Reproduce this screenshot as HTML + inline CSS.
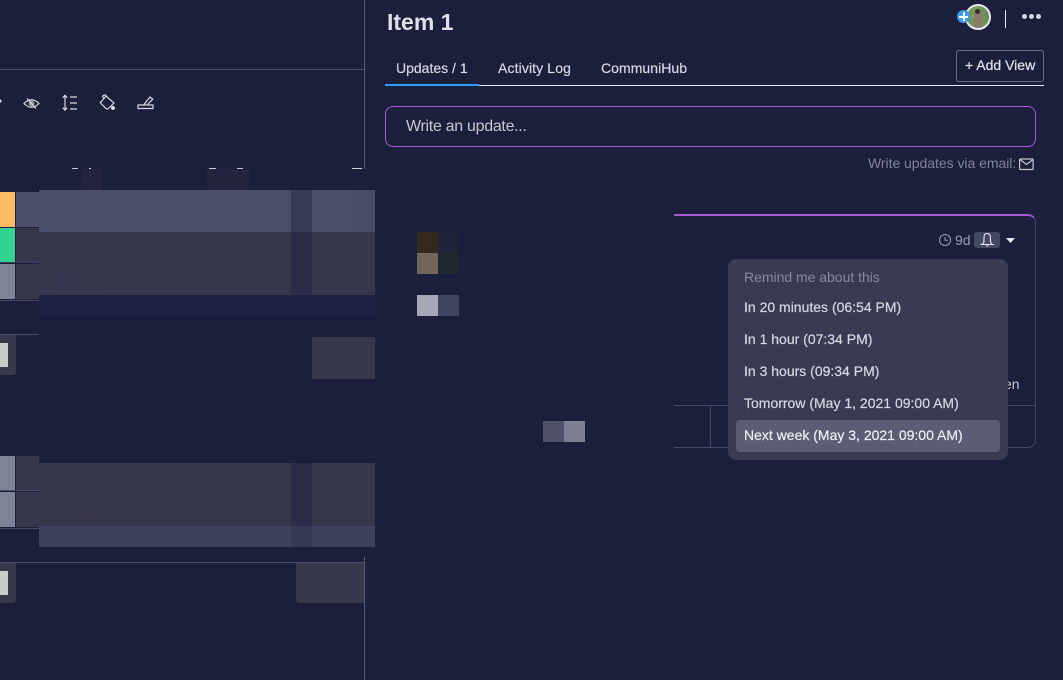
<!DOCTYPE html>
<html><head><meta charset="utf-8"><style>
html,body{margin:0;padding:0;background:#1c1f3b}
body{width:1063px;height:680px;position:relative;overflow:hidden;font-family:"Liberation Sans",sans-serif;color:#d5d8df}
.b{position:absolute}
.t{position:absolute;white-space:nowrap;line-height:20px;font-size:14px}
.m{-webkit-text-stroke:.2px currentColor}
svg{position:absolute;overflow:visible}
</style></head><body>
<!-- left panel -->
<div class="b" style="left:0;top:69px;width:364px;height:1px;background:#4b4e69"></div>
<div class="b" style="left:364px;top:0;width:1px;height:169px;background:#5b5e78"></div>
<div class="b" style="left:364px;top:557px;width:1px;height:123px;background:#5b5e78"></div>
<svg style="left:0;top:0" width="170" height="120" fill="none" stroke="#d5d8df" stroke-width="1.2">
<circle cx="0" cy="101" r="1" fill="#d5d8df"/>
<path d="M24 103.500q7.500-7.500 15 0q-7.500 7.500-15 0z"/><circle cx="31.500" cy="103.500" r="3" fill="#8f92a6" stroke="none"/><path d="M27 98.500l9 10"/>
<path d="M65 95.500v14.500M62.800 97.800l2.200-2.500 2.200 2.500M62.800 107.700l2.200 2.500 2.200-2.500M70 97h7M70 103h7M70 109h7"/>
<path d="M101 102l5-6 8 7-5.500 5.500q-1 1-2.500 0l-5-5q-1-1-.5-1.500zM104 98.500l-1.500-2q.5-1.500 2.500-1.500l2 1.500"/><circle cx="113" cy="108" r="2" fill="#d5d8df" stroke="none"/>
<path d="M143 105h-5v3.500h15v-3.500h-5M143.500 105l6.500-8 2.800 2.200-5.800 5.800z"/>
</svg>
<!-- small text remnants -->
<div class="b" style="left:72px;top:168px;width:6px;height:1px;background:#c9cbd6"></div>
<div class="b" style="left:89px;top:168px;width:2px;height:1px;background:#c9cbd6"></div>
<div class="b" style="left:209px;top:168px;width:7px;height:1px;background:#c9cbd6"></div>
<div class="b" style="left:237px;top:168px;width:6px;height:1px;background:#b9bbd0"></div>
<div class="b" style="left:352px;top:168px;width:10px;height:1px;background:#c9cbd6"></div>
<div class="b" style="left:81px;top:169px;width:21px;height:21px;background:#22243d"></div>
<div class="b" style="left:207px;top:169px;width:21px;height:21px;background:#22243d"></div>
<div class="b" style="left:228px;top:169px;width:21px;height:21px;background:#24233e"></div>
<!-- status cells -->
<div class="b" style="left:0;top:192px;width:15px;height:35px;background:#fdbc64"></div>
<div class="b" style="left:16px;top:192px;width:23px;height:35px;background:#4a4e68"></div>
<div class="b" style="left:0;top:228px;width:15px;height:34px;background:#33d391"></div>
<div class="b" style="left:16px;top:228px;width:23px;height:34px;background:#353649"></div>
<div class="b" style="left:0;top:264px;width:15px;height:35px;background:#7f8396"></div>
<div class="b" style="left:16px;top:264px;width:23px;height:35px;background:#353649"></div>
<div class="b" style="left:0;top:262px;width:39px;height:1px;background:#3a3c58"></div>
<div class="b" style="left:0;top:300px;width:39px;height:1px;background:#474a64"></div>
<div class="b" style="left:0;top:334px;width:39px;height:1px;background:#4b4e69"></div>
<div class="b" style="left:0;top:335px;width:16px;height:40px;background:#363849;border-radius:0 0 3px 0"></div>
<div class="b" style="left:0;top:343px;width:8px;height:24px;background:#cbcbcb"></div>
<div class="b" style="left:0;top:456px;width:15px;height:35px;background:#7f8396"></div>
<div class="b" style="left:16px;top:456px;width:23px;height:35px;background:#353649"></div>
<div class="b" style="left:0;top:490px;width:39px;height:1px;background:#474a64"></div>
<div class="b" style="left:0;top:492px;width:15px;height:35px;background:#7f8396"></div>
<div class="b" style="left:16px;top:492px;width:23px;height:35px;background:#353649"></div>
<div class="b" style="left:0;top:528px;width:39px;height:1px;background:#474a64"></div>
<div class="b" style="left:0;top:562px;width:364px;height:1px;background:#4b4e69"></div>
<div class="b" style="left:0;top:563px;width:16px;height:40px;background:#363849;border-radius:0 0 3px 0"></div>
<div class="b" style="left:0;top:571px;width:8px;height:24px;background:#cbcbcb"></div>
<div class="b" style="left:296px;top:563px;width:68px;height:40px;background:#363849;border-radius:0 0 0 3px"></div>
<!-- mosaic -->
<div class="b" style="left:39px;top:190px;width:336px;height:42px;background:#4a4e68"></div>
<div class="b" style="left:291px;top:190px;width:21px;height:42px;background:#383b55"></div>
<div class="b" style="left:354px;top:190px;width:21px;height:42px;background:#484c65"></div>
<div class="b" style="left:39px;top:232px;width:336px;height:63px;background:#353649"></div>
<div class="b" style="left:291px;top:232px;width:21px;height:63px;background:#2b2c46"></div>
<div class="b" style="left:60px;top:274px;width:21px;height:21px;background:#37364f"></div>
<div class="b" style="left:81px;top:274px;width:21px;height:21px;background:#36374b"></div>
<div class="b" style="left:39px;top:295px;width:336px;height:21px;background:#1e213f"></div>
<div class="b" style="left:312px;top:337px;width:63px;height:42px;background:#353649"></div>
<div class="b" style="left:39px;top:463px;width:336px;height:63px;background:#353649"></div>
<div class="b" style="left:291px;top:463px;width:21px;height:63px;background:#2b2c46"></div>
<div class="b" style="left:81px;top:505px;width:21px;height:21px;background:#37364a"></div>
<div class="b" style="left:39px;top:526px;width:336px;height:21px;background:#3e415e"></div>
<div class="b" style="left:291px;top:526px;width:21px;height:21px;background:#363953"></div>
<!-- right header -->
<div class="t" style="left:387px;top:8px;font-size:23px;line-height:28px;font-weight:bold;color:#dfe1e8">Item 1</div>
<div class="b" style="left:965px;top:4px;width:22px;height:22px;border:2px solid #e6e9ef;border-radius:50%;background:linear-gradient(90deg,#5f8a4c,#7fa066 40%,#5f8a4c);overflow:hidden"><div class="b" style="left:7px;top:3px;width:8px;height:19px;background:#8b7a6c;border-radius:4px 4px 0 0"></div><div class="b" style="left:8px;top:3px;width:5px;height:5px;background:#3a2f28;border-radius:50%"></div></div>
<div class="b" style="left:957px;top:10px;width:13px;height:13px;border-radius:50%;background:#3d9bf0"></div>
<div class="b" style="left:959px;top:16px;width:9px;height:2px;background:#fff"></div>
<div class="b" style="left:962.500px;top:12px;width:2px;height:9px;background:#fff"></div>
<div class="b" style="left:1005px;top:10px;width:1px;height:18px;background:#e6e9ef"></div>
<div class="b" style="left:1022px;top:14px;width:5px;height:5px;border-radius:50%;background:#d5d8df"></div>
<div class="b" style="left:1029px;top:14px;width:5px;height:5px;border-radius:50%;background:#d5d8df"></div>
<div class="b" style="left:1036px;top:14px;width:5px;height:5px;border-radius:50%;background:#d5d8df"></div>
<!-- tabs -->
<div class="t m" style="left:396px;top:58px;color:#d5d8df">Updates / 1</div>
<div class="t m" style="left:498px;top:58px;color:#d5d8df;letter-spacing:.12px">Activity Log</div>
<div class="t m" style="left:601px;top:58px;color:#d5d8df;letter-spacing:.05px">CommuniHub</div>
<div class="b" style="left:385px;top:85px;width:659px;height:1px;background:#e6e9ef"></div>
<div class="b" style="left:385px;top:84px;width:94px;height:2px;background:#2f9bf5"></div>
<div class="b" style="left:956px;top:50px;width:86px;height:30px;border:1px solid #676a80;border-radius:3px"></div>
<div class="t m" style="left:965px;top:55px;color:#e0e2e8">+ Add View</div>
<!-- write update -->
<div class="b" style="left:385px;top:106px;width:649px;height:39px;border:1px solid #a358d6;border-radius:8px"></div>
<div class="t" style="left:406px;top:116px;font-size:16px;line-height:22px;color:#c5c7d0;letter-spacing:-.3px">Write an update...</div>
<div class="t" style="left:868px;top:153px;color:#81839a;letter-spacing:-.04px">Write updates via email:</div>
<svg style="left:1019px;top:158px" width="15" height="13" fill="none" stroke="#c5c7d0" stroke-width="1.200"><rect x=".6" y="1" width="13.500" height="10.500" rx="1"/><path d="M1 1.500l6.500 5 6.500-5"/></svg>
<!-- post card -->
<div class="b" style="left:674px;top:214px;width:362px;height:234px;border-top:2px solid #a358d6;border-right:1px solid #3f4260;border-bottom:1px solid #45486a;border-radius:0 8px 8px 0;box-sizing:border-box"></div>
<div class="b" style="left:674px;top:405px;width:361px;height:1px;background:#45486a"></div>
<div class="b" style="left:710px;top:405px;width:1px;height:42px;background:#45486a"></div>
<div class="t" style="left:1004px;top:374px;color:#c5c7d0">en</div>
<svg style="left:939px;top:234px" width="13" height="13" fill="none" stroke="#9a9cae" stroke-width="1"><circle cx="6" cy="6" r="5.500"/><path d="M6 3v3.300h3"/></svg>
<div class="t" style="left:955px;top:230px;color:#9a9cae">9d</div>
<div class="b" style="left:974px;top:232px;width:26px;height:16px;background:#454862;border-radius:3px"></div>
<svg style="left:980px;top:232px" width="15" height="15" fill="none" stroke="#e6e9ef" stroke-width="1.100"><path d="M.5 12.500h13.500M2.500 12.500q1.500-1.500 1.500-4v-3q0-4 3.200-4t3.200 4v3q0 2.500 1.500 4M6 14h2.500"/></svg>
<svg style="left:1006px;top:238px" width="9" height="6"><path d="M0 0h9l-4.500 5z" fill="#e6e9ef"/></svg>
<!-- dropdown -->
<div class="b" style="left:728px;top:259px;width:280px;height:201px;background:#393b52;border-radius:8px"></div>
<div class="b" style="left:736px;top:420px;width:264px;height:32px;background:#5b5d74;border-radius:4px"></div>
<div class="t" style="left:744px;top:267px;color:#85879b;letter-spacing:-.02px">Remind me about this</div>
<div class="t m" style="left:744px;top:297px;color:#d5d8df">In 20 minutes (06:54 PM)</div>
<div class="t m" style="left:744px;top:329px;color:#d5d8df">In 1 hour (07:34 PM)</div>
<div class="t m" style="left:744px;top:361px;color:#d5d8df">In 3 hours (09:34 PM)</div>
<div class="t m" style="left:744px;top:393px;color:#d5d8df">Tomorrow (May 1, 2021 09:00 AM)</div>
<div class="t m" style="left:744px;top:425px;color:#eceef2">Next week (May 3, 2021 09:00 AM)</div>
<!-- center mosaic -->
<div class="b" style="left:417px;top:232px;width:21px;height:21px;background:#33291f"></div>
<div class="b" style="left:438px;top:232px;width:21px;height:21px;background:#1f2539"></div>
<div class="b" style="left:417px;top:253px;width:21px;height:21px;background:#71655c"></div>
<div class="b" style="left:438px;top:253px;width:21px;height:21px;background:#20282f"></div>
<div class="b" style="left:417px;top:295px;width:21px;height:21px;background:#a6a8b6"></div>
<div class="b" style="left:438px;top:295px;width:21px;height:21px;background:#41445e"></div>
<div class="b" style="left:543px;top:421px;width:21px;height:21px;background:#50526a"></div>
<div class="b" style="left:564px;top:421px;width:21px;height:21px;background:#7c7e92"></div>
</body></html>
